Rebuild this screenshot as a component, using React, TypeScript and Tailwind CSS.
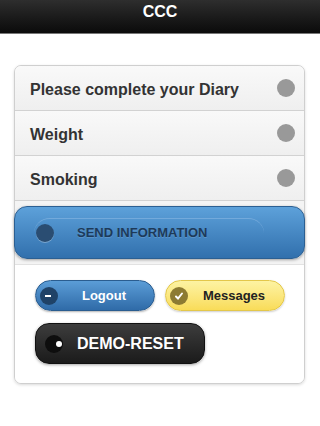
import React from "react";

const font = { fontFamily: '"Liberation Sans", Arial, sans-serif' };

const Dot = () => <span className="w-[18px] h-[18px] rounded-full bg-[#999] shrink-0" />;

const Row = ({ label }: { label: string }) => (
  <div className="h-[45px] flex items-center justify-between pl-[15px] pr-[9px] border-b border-[#d2d2d2] bg-gradient-to-b from-[#f9f9f9] to-[#efefef]">
    <span className="text-[16px] font-bold text-[#333] pt-[3px]">{label}</span>
    <Dot />
  </div>
);

export default function App() {
  return (
    <div className="w-[320px] h-[426px] bg-white overflow-hidden" style={font}>
      {/* header */}
      <div className="h-[34px] bg-gradient-to-b from-[#2e2e2e] to-[#0b0b0b] border-b border-[#777] flex justify-center">
        <span className="text-white font-bold text-[16px] leading-[24px]">CCC</span>
      </div>

      <div className="mt-[31px] mx-[14px] w-[291px] border border-[#cfcfcf] rounded-[7px] shadow-[0_1px_3px_rgba(0,0,0,0.15)]">
        <div className="rounded-t-[7px] overflow-hidden">
          <Row label="Please complete your Diary" />
          <Row label="Weight" />
          <Row label="Smoking" />
        </div>

        {/* send row */}
        <div className="py-[5px] bg-[#f4f4f4] border-b border-[#e2e2e2]">
          <button className="relative -mx-px w-[291px] h-[53px] rounded-[13px] border border-[#2b5f92] bg-gradient-to-b from-[#5da1da] to-[#3170ad] shadow-[0_1px_3px_rgba(0,0,0,0.35)] flex items-center">
            <span className="absolute left-[19px] top-[11px] w-[230px] h-[31px] rounded-[16px] border-t border-[#88b8e2]/60" />
            <span className="ml-[21px] w-[18px] h-[18px] rounded-full bg-[#2a4d72] shadow-[0_1px_0_rgba(255,255,255,0.3)]" />
            <span className="ml-[23px] text-[13px] font-bold text-[#1d3a59] [text-shadow:0_1px_0_rgba(255,255,255,0.15)]">SEND INFORMATION</span>
          </button>
        </div>

        {/* buttons */}
        <div className="bg-white rounded-b-[7px] pt-[15px] pb-[19px] pl-[20px] flex flex-col gap-[12px]">
          <div className="flex gap-[10px]">
            <button className="w-[120px] h-[31px] rounded-full border border-[#2a5d90] bg-gradient-to-b from-[#5b9dd7] to-[#2f6ba8] shadow-[0_1px_2px_rgba(0,0,0,0.3)] flex items-center">
              <span className="ml-[4px] w-[18px] h-[18px] rounded-full bg-[#1f4267] flex items-center justify-start">
                <span className="ml-[5px] w-[6px] h-[2px] bg-white" />
              </span>
              <span className="flex-1 text-center pr-[8px] text-white font-bold text-[13px] pl-[4px]">Logout</span>
            </button>
            <button className="w-[120px] h-[31px] rounded-full border border-[#e3c74a] bg-gradient-to-b from-[#fdf3a2] to-[#f9dc58] shadow-[0_1px_2px_rgba(0,0,0,0.2)] flex items-center">
              <span className="ml-[4px] w-[18px] h-[18px] rounded-full bg-[#8d7b32] flex items-center justify-center">
                <svg width="10" height="10" viewBox="0 0 10 10">
                  <path d="M2 5.5 L4 7.5 L8 2.5" stroke="white" strokeWidth="2" fill="none" strokeLinecap="round" />
                </svg>
              </span>
              <span className="flex-1 text-center text-[#222] font-bold text-[13px] pl-[2px] pr-[6px]">Messages</span>
            </button>
          </div>
          <button className="w-[170px] h-[41px] rounded-[14px] border border-[#111] bg-gradient-to-b from-[#3d3d3d] to-[#1b1b1b] shadow-[0_1px_3px_rgba(0,0,0,0.35)] flex items-center">
            <span className="ml-[9px] w-[18px] h-[18px] rounded-full bg-[#0e0e0e] relative">
              <span className="absolute right-[1px] top-[6px] w-[6px] h-[6px] rounded-full bg-white" />
            </span>
            <span className="ml-[14px] text-white font-bold text-[16px]">DEMO-RESET</span>
          </button>
        </div>
      </div>
    </div>
  );
}
